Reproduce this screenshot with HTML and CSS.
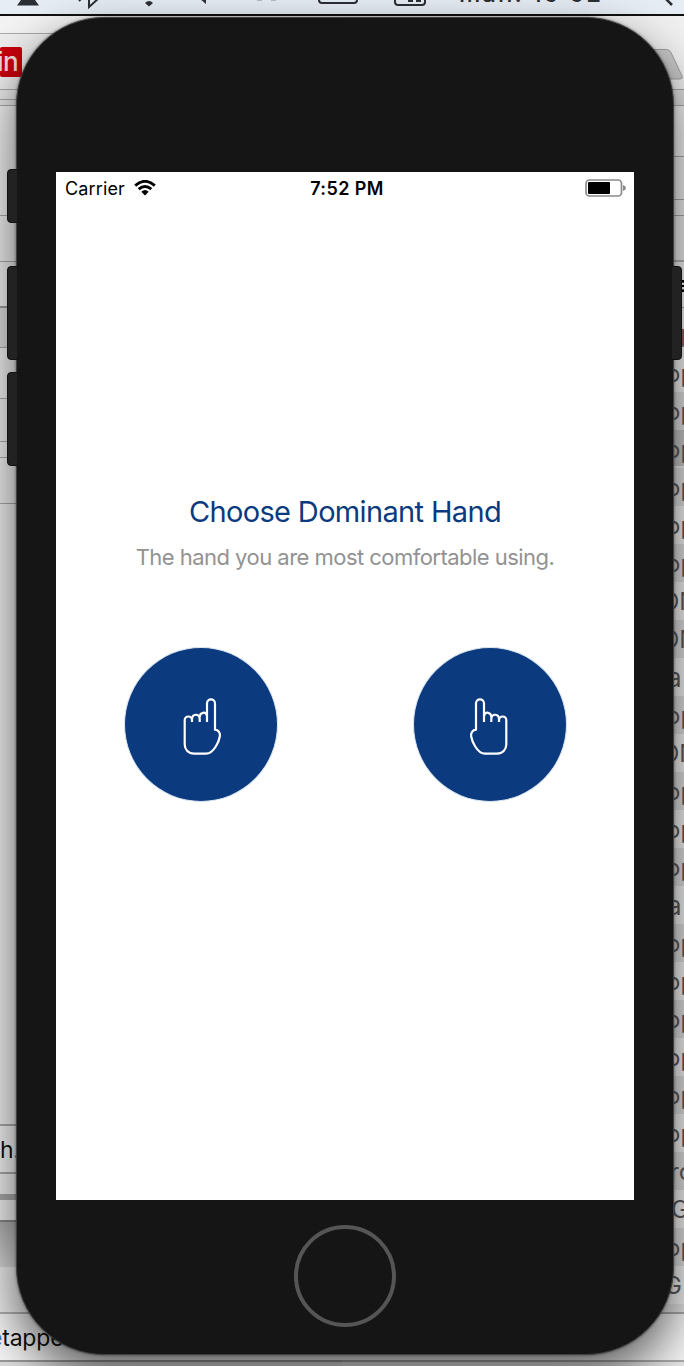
FILE: index.html
```
<!DOCTYPE html>
<html lang="en">
<head>
<meta charset="utf-8">
<title>Choose Dominant Hand</title>
<link rel="stylesheet" href="styles.css">
</head>
<body>
<div class="desktop">
  <div class="menubar">
    <svg width="684" height="14" viewBox="0 0 684 14" fill="none" stroke="#2c2f34" stroke-width="2">
      <path d="M28-10L39 5.500H17Z" fill="#2c2f34" stroke="none"/>
      <path d="M79 1l3-3M89-4V7L99-2"/>
      <path d="M145 3q4-4 8 0l-4 3.500Z" fill="#2c2f34" stroke="none"/>
      <path d="M206-6V4L199-2Z" fill="#2c2f34" stroke="none"/>
      <path d="M257 0h5M271 0h5" stroke="#b5b9c0"/>
      <rect x="319" y="-12" width="38" height="15" rx="3"/>
      <rect x="395" y="-12" width="30" height="17" rx="3"/>
      <path d="M408 0h5M416 0h5" stroke-width="4"/>
      <path d="M664-3l8 8" stroke-width="2.500"/>
    </svg>
    <span class="clock">man. 19 52</span>
  </div>
  <div class="behind">
    <div class="side left">
      <div class="l-tabs"></div>
      <div class="l-site"><span class="badge">in</span></div>
      <div class="l-rule"></div>
      <div class="l-bar"></div>
      <div class="l-a"></div>
      <div class="l-b"></div>
      <div class="l-c"></div>
      <div class="l-d"></div>
      <div class="l-e"></div>
      <div class="l-f"></div>
      <div class="l-g"></div>
      <div class="l-h"></div>
      <div class="l-body"></div>
      <div class="l-text">h.</div>
      <div class="l-track"></div>
      <div class="l-foot"></div>
      <div class="l-dark"></div>
      <div class="l-gap"></div>
      <div class="l-file"><i>e</i>tappe</div>
      <div class="l-end"></div>
    </div>
    <div class="side right">
      <div class="r-tabs"><svg width="44" height="73" viewBox="0 0 44 73"><path d="M0 33.500H26q4 0 5 3L42 60q1 3-2 3H0" fill="#c9c9c9" stroke="#a0a0a0"/></svg></div>
      <div class="r-bar"></div>
      <div class="r-a"></div>
      <div class="r-b"></div>
      <div class="r-c"></div>
      <div class="r-d"></div>
      <div class="r-e">e</div>
      <div class="r-f">p</div>
      <ul class="rows">
        <li>op</li><li>op</li><li class="selected">op</li><li>op</li><li>op</li><li>op</li>
        <li class="caps">ON</li><li class="caps">ON</li><li class="a">a</li><li>op</li><li class="caps">ON</li>
        <li>op</li><li>op</li><li>op</li><li class="a">a</li><li>op</li><li>op</li><li>op</li><li>op</li><li>op</li><li>op</li>
        <li class="ro">ro</li><li class="g">G</li><li>op</li><li class="g last">G</li>
      </ul>
      <div class="r-end"></div>
      <div class="r-foot"></div>
    </div>
  </div>

  <div class="key mute"></div>
  <div class="key up"></div>
  <div class="key down"></div>
  <div class="key power"></div>

  <div class="phone">
    <main class="screen">
      <header class="status">
        <div class="carrier"><span>Carrier</span>
          <svg width="22" height="16" viewBox="0 0 22 16" fill="none" stroke="#000" stroke-width="2.900">
            <path d="M1.200 5.700Q11-3 20.800 5.700"/><path d="M4.700 9.200Q11 3.600 17.300 9.200"/>
            <path d="M7.300 11.700Q11 8.500 14.700 11.700L11 15.400Z" fill="#000" stroke="none"/>
          </svg>
        </div>
        <div class="time">7:52 PM</div>
        <svg class="battery" width="42" height="18" viewBox="0 0 42 18">
          <rect x="1" y="1" width="35.500" height="16" rx="3.500" fill="none" stroke="#8a8a8a" stroke-width="1.700"/>
          <rect x="3" y="3" width="22" height="12" rx="1" fill="#000"/>
          <path d="M38 6q3 1 3 3t-3 3Z" fill="#8a8a8a"/>
        </svg>
      </header>
      <h1>Choose Dominant Hand</h1>
      <p>The hand you are most comfortable using.</p>
      <div class="choices">
        <button class="hand" aria-label="Left hand">
          <svg width="40" height="60" viewBox="0 0 40 60"><path d="M25 25V6.400a4 4 0 0 1 8 0V32.700C36.500 33 38.500 36 37.800 39.500C37.200 43 35.700 46.500 33.800 49.500C31 54 28.500 56.700 24 56.700H12C6.500 56.700 2.700 52.500 2.700 47.500V23.300a3.650 3.800 0 0 1 7.300 0V25M10 22.500c0-6 7.700-6.500 7.700-.5v3M17.700 20.500c0-5.500 6-6.500 7.300-1.500"/></svg>
        </button>
        <button class="hand mirrored" aria-label="Right hand">
          <svg width="40" height="60" viewBox="0 0 40 60"><path d="M25 25V6.400a4 4 0 0 1 8 0V32.700C36.500 33 38.500 36 37.800 39.500C37.200 43 35.700 46.500 33.800 49.500C31 54 28.500 56.700 24 56.700H12C6.500 56.700 2.700 52.500 2.700 47.500V23.300a3.650 3.800 0 0 1 7.300 0V25M10 22.500c0-6 7.700-6.500 7.700-.5v3M17.700 20.500c0-5.500 6-6.500 7.300-1.500"/></svg>
        </button>
      </div>
    </main>
    <div class="home"></div>
  </div>
</div>
</body>
</html>
```
FILE: styles.css
```
* { box-sizing: border-box; }
body { margin: 0; font-family: Inter, "Liberation Sans", sans-serif; }
.desktop { position: relative; width: 684px; height: 1366px; overflow: hidden; background: #e6e6e6; }

.menubar { position: relative; height: 16px; background: #e7edf5; border-bottom: 2px solid #111; overflow: hidden; }
.menubar svg { display: block; }
.clock { position: absolute; left: 459px; top: -20px; font-size: 24px; line-height: 28px; font-weight: 500; letter-spacing: 2px; color: #2c2f34; white-space: nowrap; }

/* windows behind the simulator */
.behind { display: flex; height: 1350px; }
.side { display: flex; flex-direction: column; width: 342px; overflow: hidden; }
.side > div { flex: none; border-bottom: 1px solid #a8a8a8; }
.l-tabs { height: 18px; background: #f3f3f3; }
.l-site { height: 56px; padding-top: 13px; background: #ededed; }
.badge { display: block; width: 22px; height: 30px; background: #c6000c; border-radius: 2px; color: #f4dada; font-size: 26px; line-height: 29px; font-weight: 500; text-indent: -3px; letter-spacing: -.5px; }
.l-rule { height: 10px; background: #e9e9e9; }
.l-bar { height: 6px; background: #e6e6e6; }
.l-a { height: 110px; background: #f0f0f0; }
.l-b { height: 46px; background: #eee; }
.side .l-c { height: 46px; background: #eee; border-bottom: 2px solid #999; }
.l-d { height: 40px; background: #d9d9d9; }
.l-e { height: 51px; background: #eee; }
.l-f { height: 43px; background: #ececec; }
.l-g { height: 16px; background: #ededed; }
.l-h { height: 46px; background: #efefef; }
.side .l-body { height: 622px; background: #f1f1f1; border-bottom: 2px solid #aaa; }
.side .l-text { height: 48px; background: #f4f4f4; font-size: 23px; line-height: 48px; color: #111; border-bottom: 2px solid #aaa; }
.side .l-track { height: 26px; background: #f1f1f1; border-bottom: 6px solid #aaa; }
.side .l-foot { height: 22px; background: #f1f1f1; border-bottom: 2px solid #888; }
.side .l-dark { height: 45px; background: linear-gradient(#b0b0b0, #d8d8d8); border: 0; }
.side .l-gap { height: 47px; background: #eee; border-bottom: 2px solid #b0b0b0; }
.side .l-file { height: 48px; background: #f5f5f5; font-size: 23px; line-height: 49px; color: #111; text-indent: -11px; letter-spacing: -.2px; border-bottom: 2px solid #999; }
.l-file i { font-style: normal; color: #3c7fc0; }
.l-end { height: 5px; background: #ddd; }

.right > div { padding-left: 298px; }
.r-tabs { height: 74px; background: #f0f0f0; }
.r-tabs svg { display: block; }
.r-bar { height: 16px; background: #dedede; }
.r-a { height: 51px; background: #f2f2f2; }
.r-b { height: 43px; background: #eee; }
.r-c { height: 16px; background: #eee; }
.side .r-d { height: 46px; background: #ededed; border-bottom: 2px solid #b5b5b5; }
.right .r-e { height: 46px; padding-left: 334px; background: #f2f2f2; font-size: 22px; line-height: 44px; font-weight: 700; }
.right .r-f { height: 46px; padding-left: 338px; background: #f0f0f0; border: 0; font-size: 24px; line-height: 52px; color: #8a5a50; }
.rows { flex: none; margin: 0; padding: 0 0 0 298px; list-style: none; font-size: 24px; line-height: 39px; color: #5c5c60; }
.rows li { height: 38px; padding-left: 26px; background: #f2f2f2; white-space: nowrap; }
.rows li:nth-child(even) { background: #dfdfdf; }
.rows .selected { background: #c6c6c6; border-bottom: 2px solid #eee; }
.rows .caps { padding-left: 21px; }
.rows .a { padding-left: 27px; font-size: 26px; }
.rows .ro { padding-left: 30px; }
.rows .g { padding-left: 31px; }
.rows .last { padding-left: 24px; }
.side .r-end { height: 10px; background: #e4e4e4; border-bottom: 2px solid #aaa; }
.side .r-foot { height: 48px; background: #f5f5f5; border-bottom: 2px solid #aaa; }

.key { position: absolute; left: 7px; width: 14px; border: 1px solid #111; border-radius: 4px; background: #222; z-index: 2; clip-path: inset(0 4px 0 0); }
.mute { top: 169px; height: 54px; }
.up { top: 266px; height: 94px; }
.down { top: 372px; height: 94px; }
.power { left: 668px; top: 266px; height: 94px; clip-path: inset(0 0 0 4px); }

.phone { position: absolute; left: 16px; top: 17px; width: 658px; height: 1338px; padding-top: 154px; display: flex; flex-direction: column; align-items: center; border-radius: 88px; background: #151515; border: 1px solid #404040; box-shadow: 0 22px 50px rgba(0,0,0,.62), 0 0 3px rgba(0,0,0,.5); }
.screen { width: 578px; height: 1028px; flex: none; background: #fff; }
.status { display: grid; grid-template-columns: 1fr auto 1fr; align-items: center; height: 32px; padding: 0 7px 0 9px; font-size: 18px; color: #000; }
.carrier { display: flex; align-items: center; gap: 9px; letter-spacing: .15px; }
.time { position: relative; left: 1px; font-weight: 600; letter-spacing: .4px; }
.battery { justify-self: end; }
h1 { margin: 290px 0 0; text-align: center; font-size: 29px; line-height: 36px; font-weight: 400; letter-spacing: -.65px; color: #0b3a7e; }
p { margin: 12px 0 0; text-align: center; font-size: 22px; line-height: 30px; letter-spacing: -.53px; color: #929292; }
.choices { display: flex; justify-content: space-between; margin-top: 75px; padding: 0 67px 0 68px; }
.hand { width: 154px; height: 155px; padding: 4px 0 0 2px; display: grid; place-items: center; border: 1px solid #dce6f1; border-radius: 50%; background: #0b3a7e; }
.hand svg { fill: none; stroke: #fff; stroke-width: 2.200; stroke-linecap: butt; stroke-linejoin: round; }
.mirrored { padding: 4px 2px 0 0; }
.mirrored svg { transform: scaleX(-1); }
.home { flex: none; width: 102px; height: 102px; margin-top: 25px; border: 4px solid #555; border-radius: 50%; }
```
